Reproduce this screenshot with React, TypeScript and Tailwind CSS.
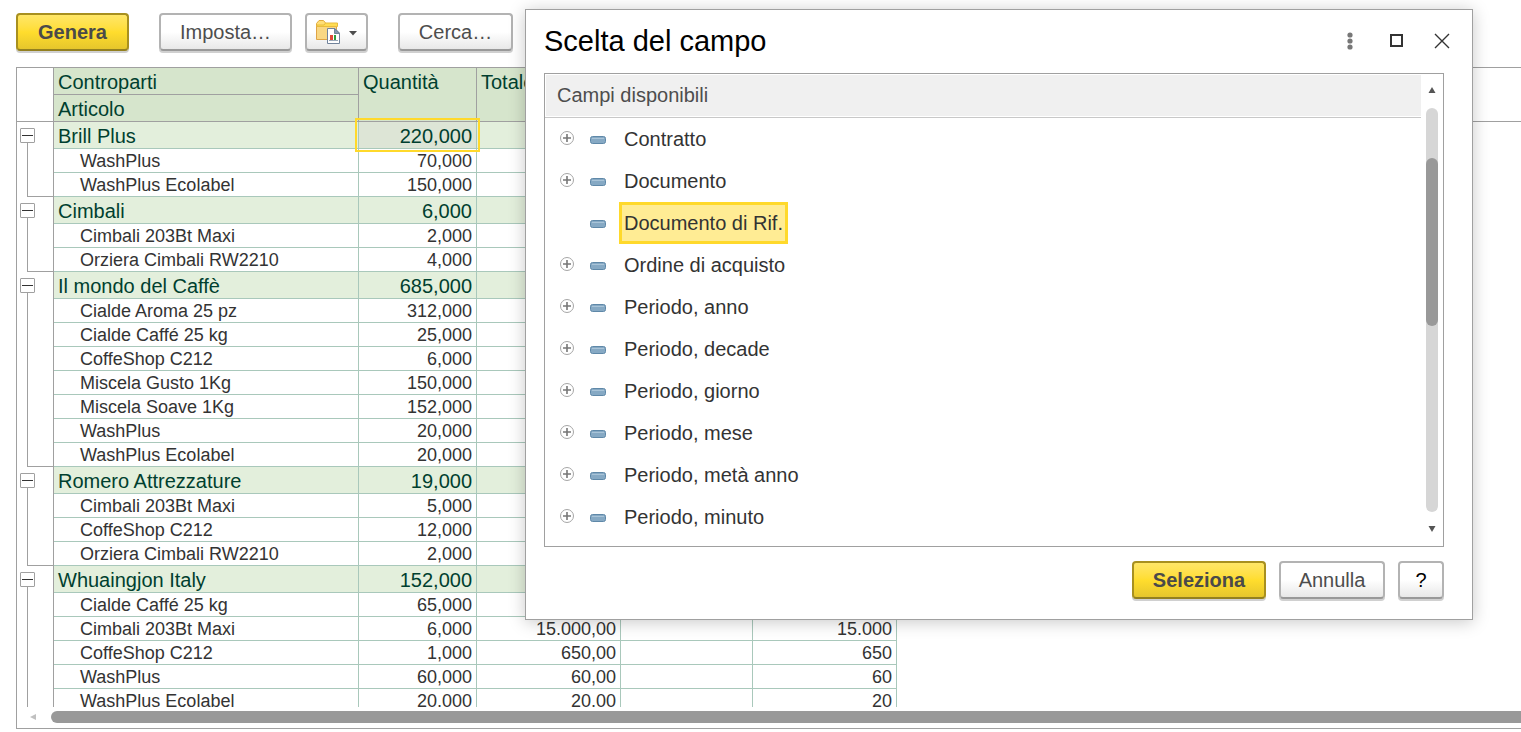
import type { ReactNode } from "react";
import clsx from "clsx";

type Item = { name: string; values: string[] };
type Group = { name: string; total: string; items: Item[]; open?: boolean };

const groups: Group[] = [
  {
    name: "Brill Plus",
    total: "220,000",
    items: [
      { name: "WashPlus", values: ["70,000"] },
      { name: "WashPlus Ecolabel", values: ["150,000"] },
    ],
  },
  {
    name: "Cimbali",
    total: "6,000",
    items: [
      { name: "Cimbali 203Bt Maxi", values: ["2,000"] },
      { name: "Orziera Cimbali RW2210", values: ["4,000"] },
    ],
  },
  {
    name: "Il mondo del Caffè",
    total: "685,000",
    items: [
      { name: "Cialde Aroma 25 pz", values: ["312,000"] },
      { name: "Cialde Caffé 25 kg", values: ["25,000"] },
      { name: "CoffeShop C212", values: ["6,000"] },
      { name: "Miscela Gusto 1Kg", values: ["150,000"] },
      { name: "Miscela Soave 1Kg", values: ["152,000"] },
      { name: "WashPlus", values: ["20,000"] },
      { name: "WashPlus Ecolabel", values: ["20,000"] },
    ],
  },
  {
    name: "Romero Attrezzature",
    total: "19,000",
    items: [
      { name: "Cimbali 203Bt Maxi", values: ["5,000"] },
      { name: "CoffeShop C212", values: ["12,000"] },
      { name: "Orziera Cimbali RW2210", values: ["2,000"] },
    ],
  },
  {
    name: "Whuaingjon Italy",
    total: "152,000",
    open: true,
    items: [
      { name: "Cialde Caffé 25 kg", values: ["65,000"] },
      { name: "Cimbali 203Bt Maxi", values: ["6,000", "15.000,00", "", "15.000"] },
      { name: "CoffeShop C212", values: ["1,000", "650,00", "", "650"] },
      { name: "WashPlus", values: ["60,000", "60,00", "", "60"] },
      { name: "WashPlus Ecolabel", values: ["20,000", "20,00", "", "20"] },
    ],
  },
];

const fields = [
  { label: "Contratto", expandable: true },
  { label: "Documento", expandable: true },
  { label: "Documento di Rif.", expandable: false },
  { label: "Ordine di acquisto", expandable: true },
  { label: "Periodo, anno", expandable: true },
  { label: "Periodo, decade", expandable: true },
  { label: "Periodo, giorno", expandable: true },
  { label: "Periodo, mese", expandable: true },
  { label: "Periodo, metà anno", expandable: true },
  { label: "Periodo, minuto", expandable: true },
];

type ButtonProps = {
  children: ReactNode;
  primary?: boolean;
  className?: string;
  label?: string;
};

const Button = ({ children, primary, className, label }: ButtonProps) => (
  <button
    type="button"
    aria-label={label}
    className={clsx(
      "flex h-[38px] shrink-0 items-center justify-center rounded-[4px] border-2 text-xl leading-6 shadow-[0_2px_0_#d0d0d0]",
      primary
        ? "border-[#a8901f] border-b-[#93801f] bg-linear-to-b from-[#ffe666] via-[#ffdd2d] to-[#e6c62c] font-bold text-[#4a4a4a]"
        : "border-[#b3b3b3] border-b-[#999] bg-linear-to-b from-white from-50% to-[#e8e8e8] text-[#4d4d4d]",
      className
    )}
  >
    {children}
  </button>
);

const ReportIcon = () => (
  <svg width="26" height="26" viewBox="0 0 26 26" aria-hidden="true">
    <path d="M1.5 8V4.5L4 1.5H8.5L11 4.5V8Z" fill="#ffdf77" stroke="#e2ab3d" />
    <path d="M1.5 7.5H21.5V20.5H1.5Z" fill="#f9d783" stroke="#dfa445" />
    <path d="M2 7.5H22.5V4H10.5L9 6H2Z" fill="#ffdc52" stroke="#e8bb3e" />
    <path d="M12.5 9.5H20L24.5 14V24.5H12.5Z" fill="#fff" stroke="#71839b" />
    <path d="M19.5 9.5V14.5H24.5Z" fill="#8396ad" stroke="#71839b" />
    <path d="M14 21.5H23" stroke="#9aa8b8" />
    <rect x="15" y="16" width="3" height="5" fill="#e04a3a" />
    <rect x="19" y="16" width="2" height="5" fill="#2f9e3f" />
  </svg>
);

const Toolbar = () => (
  <div className="flex items-center px-4 pt-[13px]">
    <Button primary className="w-[113px]">Genera</Button>
    <Button className="ml-[30px] w-[133px]">Imposta…</Button>
    <Button className="ml-[13px] w-[63px] gap-2 pr-0.5" label="Varianti del report">
      <ReportIcon />
      <svg className="mt-0.5" width="8" height="5" viewBox="0 0 8 5" aria-hidden="true">
        <path d="M0 0H8L4 4.5Z" fill="#4d4d4d" />
      </svg>
    </Button>
    <Button className="ml-[30px] w-[115px]">Cerca…</Button>
  </div>
);

const Report = () => {
  const head = "border-r border-b border-[#a0a0a0] bg-[#d6e5cc] p-0 pt-0.5 pl-1 text-left align-top font-normal";
  const cell = "border-r border-b border-[#a9c8bb] p-0 pt-0.5 pr-1 text-right";

  return (
    <section className="mt-4 ml-4 flex min-h-0 flex-1 flex-col border border-r-0 border-[#a0a0a0]">
      <div className="min-h-0 flex-1 overflow-hidden">
        <table className="w-full table-fixed border-separate border-spacing-0">
          <colgroup>
            <col className="w-[37px]" />
            <col className="w-[305px]" />
            <col className="w-[118px]" />
            <col className="w-[144px]" />
            <col className="w-[132px]" />
            <col className="w-[144px]" />
            <col />
          </colgroup>
          <thead className="text-xl leading-6 text-[#003f2f]">
            <tr className="h-[27px]">
              <td rowSpan={2} className="border-r border-b border-[#a0a0a0]" />
              <th className={head}>Controparti</th>
              <th rowSpan={2} className={head}>Quantità</th>
              <th rowSpan={2} className={head}>Totale</th>
              <td rowSpan={2} className={head} />
              <td rowSpan={2} className={head} />
              <td rowSpan={2} className="border-b border-[#a0a0a0]" />
            </tr>
            <tr className="h-[27px]">
              <th className={head}>Articolo</th>
            </tr>
          </thead>
          {groups.map((group, groupIndex) => (
            <tbody key={group.name}>
              <tr className="h-[27px] text-xl leading-6 text-[#003f2f]">
                <td className="border-r border-[#a0a0a0] p-0">
                  <div className="flex h-[27px] flex-col pt-[6px] pl-[3px]">
                    <button
                      type="button"
                      aria-label={`Comprimi ${group.name}`}
                      className="flex size-[15px] items-center justify-center rounded-[1px] border border-[#a0a0a0] bg-white"
                    >
                      <span className="h-px w-[11px] bg-[#333]" />
                    </button>
                    <div className="ml-[7px] w-px flex-1 bg-[#a0a0a0]" />
                  </div>
                </td>
                <td className="border-r border-b border-[#a9c8bb] bg-[#e3efdc] p-0 pt-0.5 pl-1">{group.name}</td>
                {groupIndex === 0 ? (
                  <td className={clsx(cell, "relative bg-[#dde5d6]")}>
                    {group.total}
                    <div className="pointer-events-none absolute -inset-1 border-2 border-[#ffd92b]" />
                  </td>
                ) : (
                  <td className={clsx(cell, "bg-[#e3efdc]")}>{group.total}</td>
                )}
                <td className={clsx(cell, "bg-[#e3efdc]")} />
                <td className={clsx(cell, "bg-[#e3efdc]")} />
                <td className={clsx(cell, "bg-[#e3efdc]")} />
                <td />
              </tr>
              {group.items.map((item, index) => (
                <tr key={item.name} className="h-6 text-lg leading-[21px] text-[#333]">
                  <td className="border-r border-[#a0a0a0] p-0 pl-[10px]">
                    <div
                      className={clsx(
                        "h-6 border-l border-[#a0a0a0]",
                        index === group.items.length - 1 && !group.open && "border-b"
                      )}
                    />
                  </td>
                  <td className="border-r border-b border-[#a9c8bb] p-0 pt-0.5 pl-[26px]">{item.name}</td>
                  {[0, 1, 2, 3].map((column) => (
                    <td key={column} className={cell}>{item.values[column]}</td>
                  ))}
                  <td />
                </tr>
              ))}
            </tbody>
          ))}
        </table>
      </div>
      <div className="flex h-[21px] items-start gap-[15px] pt-1 pl-[13px]">
        <svg className="mt-[3px]" width="6" height="6" viewBox="0 0 6 6" aria-hidden="true">
          <path d="M6 0V6L0 3Z" fill="#c0c0c0" />
        </svg>
        <div className="h-3 flex-1 rounded-l-full bg-[#999]" />
      </div>
    </section>
  );
};

const FieldDialog = () => (
  <div
    role="dialog"
    aria-labelledby="dialog-title"
    className="absolute top-[9px] right-12 w-[948px] border border-[#a0a0a0] bg-white pb-5 shadow-[0_2px_16px_rgba(0,0,0,0.22)]"
  >
    <div className="flex h-[63px] items-center justify-between pr-[15px] pb-0.5 pl-[18px]">
      <h1 id="dialog-title" className="text-[29px] leading-8 text-black">Scelta del campo</h1>
      <div className="flex gap-4">
        <button type="button" aria-label="Altro" className="flex size-[30px] items-center justify-center">
          <svg width="6" height="18" viewBox="0 0 6 18">
            <circle cx="3" cy="3" r="2.6" fill="#777" />
            <circle cx="3" cy="9" r="2.6" fill="#777" />
            <circle cx="3" cy="15" r="2.6" fill="#777" />
          </svg>
        </button>
        <button type="button" aria-label="Ingrandisci" className="flex size-[30px] items-center justify-center">
          <span className="size-[13px] border-2 border-[#333]" />
        </button>
        <button type="button" aria-label="Chiudi" className="flex size-[30px] items-center justify-center">
          <svg width="16" height="16" viewBox="0 0 16 16">
            <path d="M1 1L15 15M15 1L1 15" stroke="#333" strokeWidth="1.4" />
          </svg>
        </button>
      </div>
    </div>

    <div className="mr-7 ml-[18px] flex border border-[#a0a0a0]">
      <div className="flex-1 pb-2">
        <div className="border-b border-[#c8c8c8] py-px pl-px">
          <div className="h-[41px] bg-[#f0f0f0] pl-[11px] text-xl leading-[41px] text-[#4d4d4d]">Campi disponibili</div>
        </div>
        <ul>
          {fields.map((field) => (
            <li key={field.label} className="flex h-[42px] items-center pl-[15px]">
              {field.expandable ? (
                <button type="button" aria-label={`Espandi ${field.label}`} className="mb-0.5 size-[15px]">
                  <svg width="15" height="15" viewBox="0 0 15 15">
                    <circle cx="7" cy="7" r="6.5" fill="#fff" stroke="#a6a6a6" />
                    <path d="M3 7H11M7 3V11" stroke="#777" strokeWidth="1.6" />
                  </svg>
                </button>
              ) : (
                <span className="w-[15px]" />
              )}
              <svg className="mt-0.5 mr-[13px] ml-[15px]" width="16" height="8" viewBox="0 0 16 8" aria-hidden="true">
                <rect x="0.5" y="0.5" width="15" height="7" rx="2" fill="#86a9c4" stroke="#5f88a8" />
                <path d="M2 2.5H14" stroke="#a9c4d8" />
              </svg>
              <span
                className={clsx(
                  "h-[42px] border-[3px] px-[2px] text-xl leading-9 text-[#333]",
                  field.expandable ? "border-transparent" : "border-[#ffd92b] bg-[#ffec94]"
                )}
              >
                {field.label}
              </span>
            </li>
          ))}
        </ul>
      </div>
      <div className="flex w-[22px] flex-col items-center pt-[13px] pb-[14px]">
        <svg width="8" height="6" viewBox="0 0 8 6" aria-hidden="true">
          <path d="M4 0L7.5 6H0.5Z" fill="#555" />
        </svg>
        <div className="mt-[15px] mb-[14px] w-3 flex-1 rounded-full bg-[#d6d6d6] pt-[50px]">
          <div className="h-[168px] rounded-full bg-[#999]" />
        </div>
        <svg width="8" height="6" viewBox="0 0 8 6" aria-hidden="true">
          <path d="M0.5 0H7.5L4 6Z" fill="#555" />
        </svg>
      </div>
    </div>

    <div className="mt-[14px] mr-7 flex justify-end gap-[13px]">
      <Button primary className="w-[134px]">Seleziona</Button>
      <Button className="w-[106px]">Annulla</Button>
      <Button className="w-[46px] text-black">?</Button>
    </div>
  </div>
);

const App = () => {
  return (
    <main className="relative flex h-screen flex-col overflow-hidden bg-white pb-[3px] font-['Liberation_Sans',Arial,sans-serif]">
      <Toolbar />
      <Report />
      <FieldDialog />
    </main>
  );
};

export default App;
